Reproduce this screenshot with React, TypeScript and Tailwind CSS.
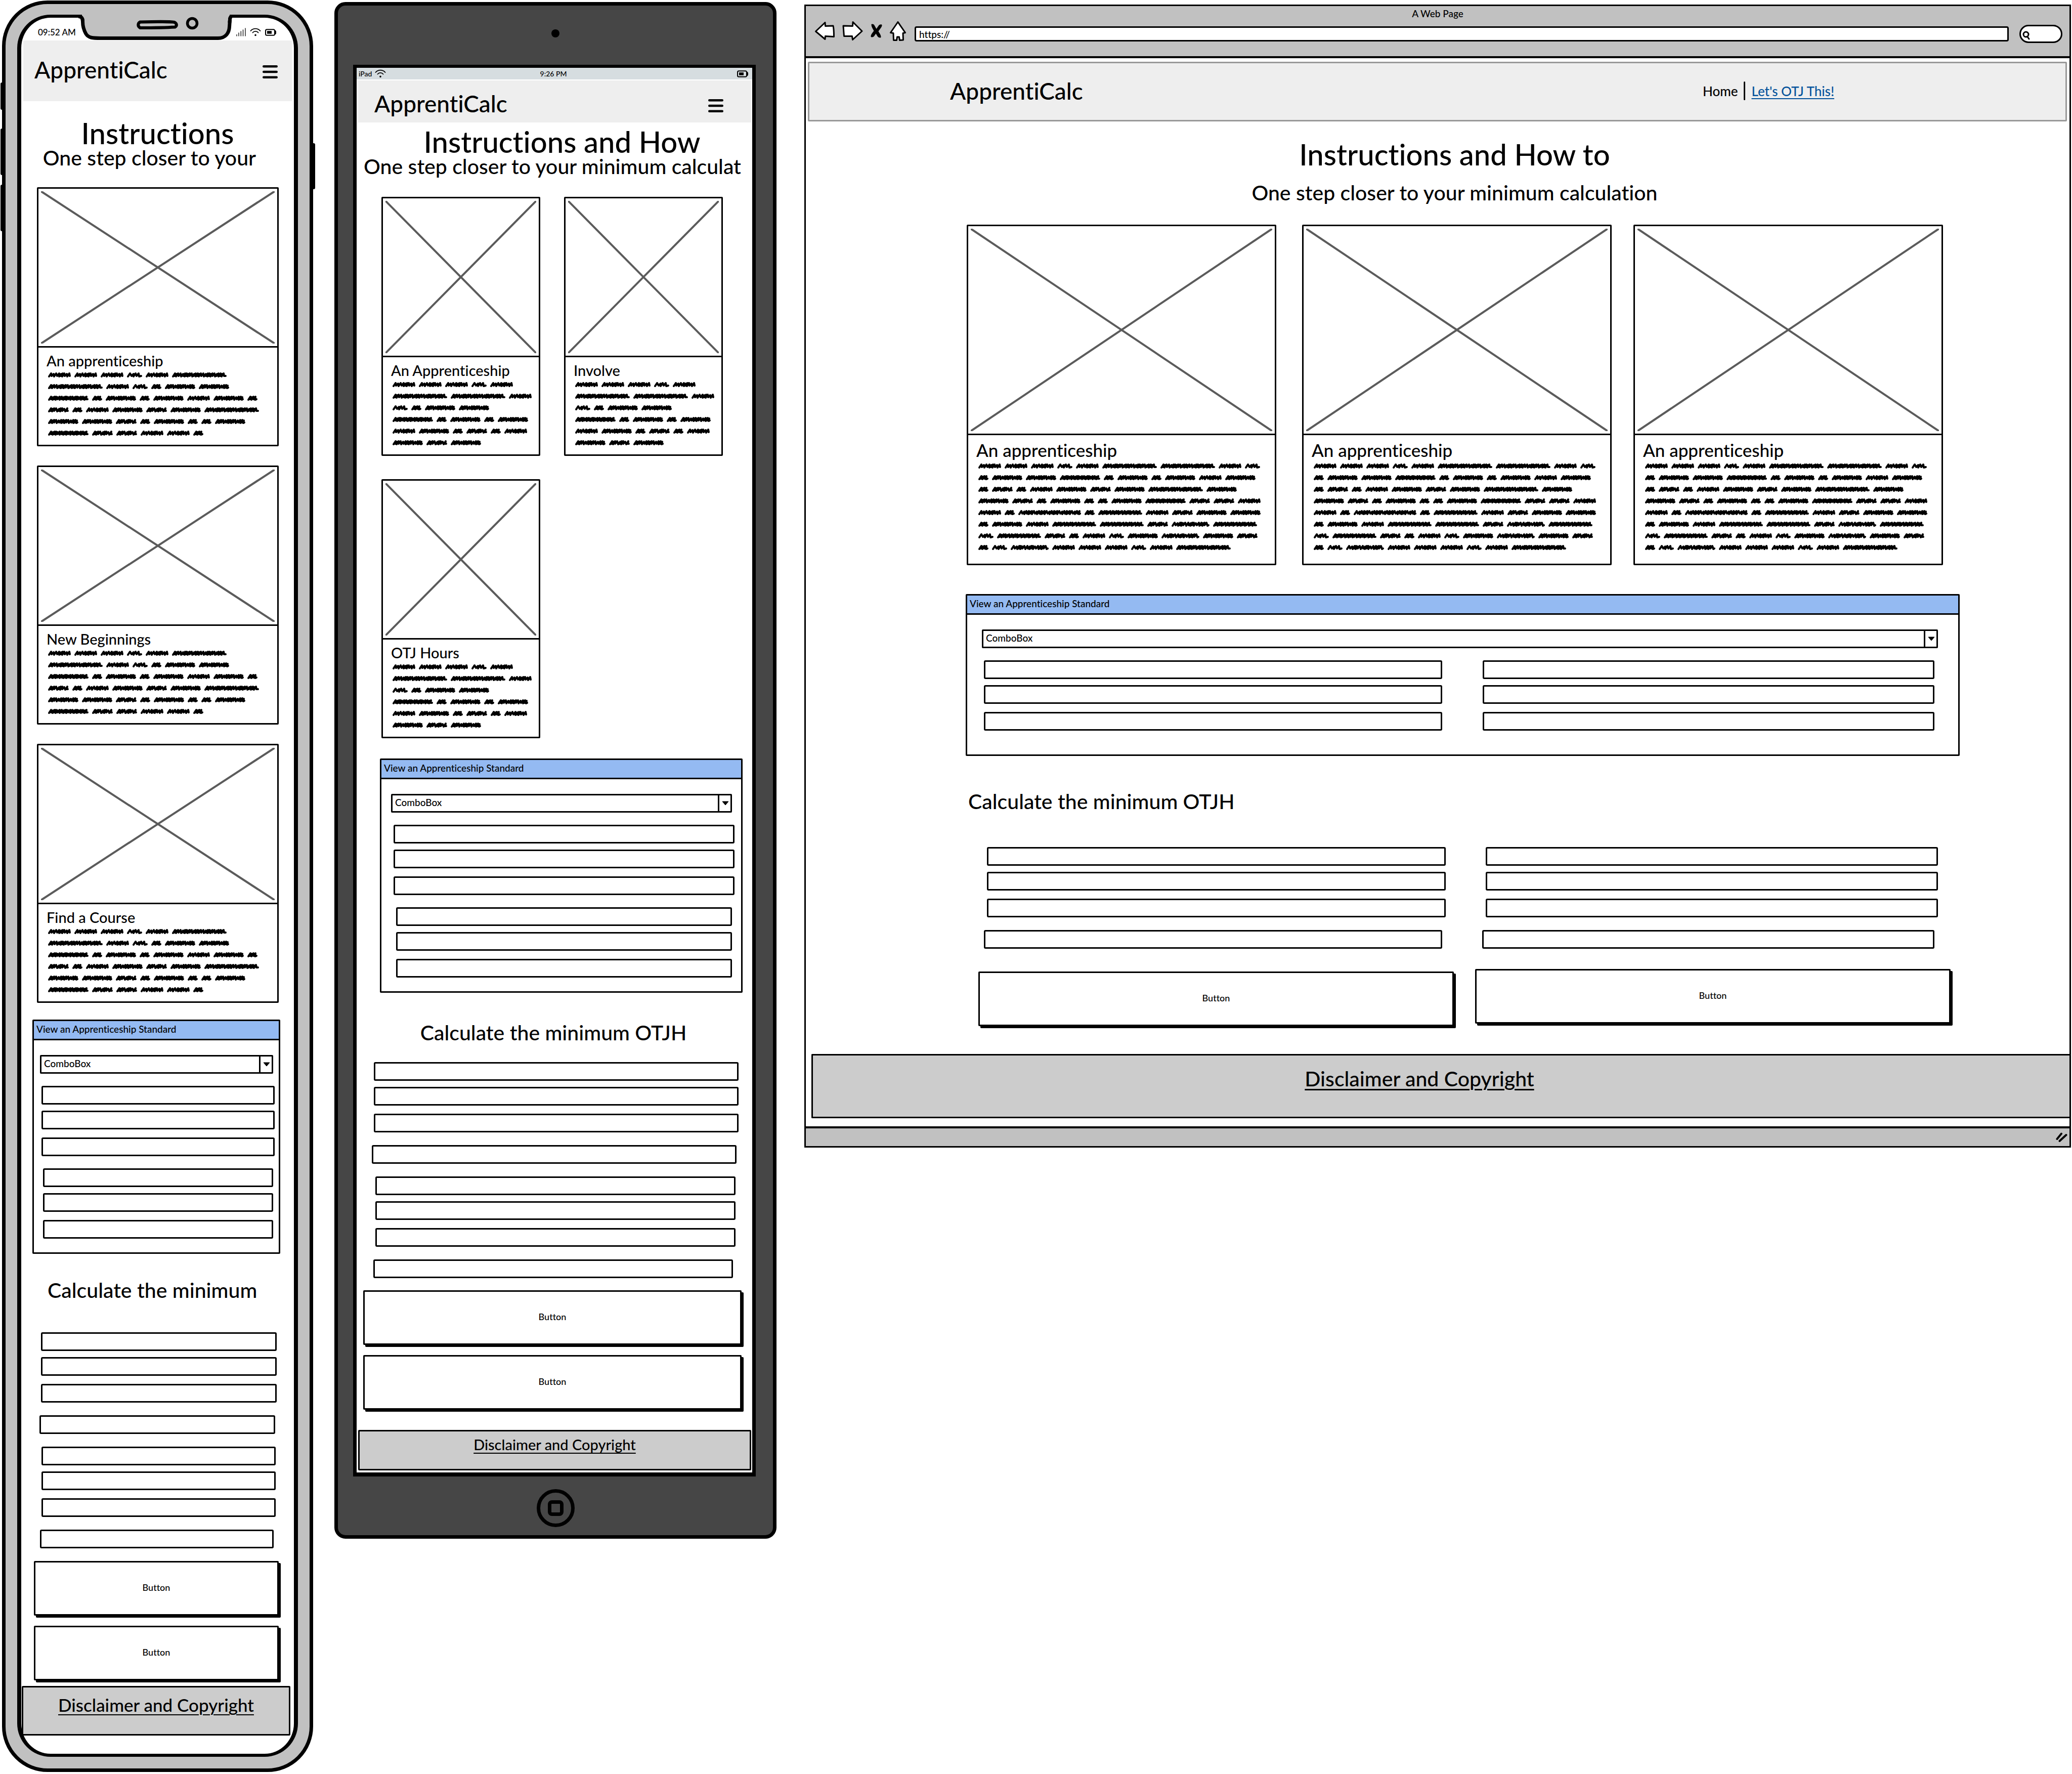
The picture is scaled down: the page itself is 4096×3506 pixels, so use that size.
import React from "react";

const WORDS = [
  45, 45, 45, 30, 45, 108, 108, 45, 30, 20, 60, 60, 80, 20, 60, 20, 60, 45, 60, 20, 41, 20, 45, 60, 41, 60, 108, 60, 60,
  41, 20, 60, 20, 20, 60, 80, 41, 41, 45, 45, 20, 124, 20, 87, 45, 41, 60, 60, 20, 60, 45, 87, 87, 41, 75, 87, 30, 87,
  41, 20, 45, 30, 60, 75, 60, 41, 20, 30, 75, 45, 45, 45, 30, 45, 108,
];

const STEPS: Record<number, number[]> = {
  45: [5, 5, 6, 4, 3, 3],
  30: [7, 4, 6, 5],
  108: [3, 3, 5, 5, 4, 3, 3, 3, 4, 5, 3, 4],
  20: [3, 3, 4],
  60: [3, 3, 4, 5, 5, 4],
  80: [4, 3, 3, 3, 4, 4],
  41: [3, 3, 4, 6],
  124: [6, 4, 5, 3, 3, 4],
  87: [3, 4, 4, 4, 3, 5],
  75: [6, 5, 3, 3, 4],
};

function scribblePath(width: number) {
  const steps = STEPS[width];
  let x = 2;
  let d = "M2 8";
  let i = 0;
  while (x + 4 < width - 2) {
    const step = steps[i % steps.length];
    const top = 2 + (i % 3 === 1 ? 1 : 0);
    const bottom = 7 + (i % 2);
    d += `L${x + 4} ${top}L${Math.min(x + step, width - 2)} ${bottom}`;
    x += step;
    i += 1;
  }
  return `${d}L${width - 2} 7`;
}

function Scribble({ count }: { count: number }) {
  return (
    <div className="flex flex-wrap gap-x-[7px] gap-y-[13px]" aria-hidden="true">
      {WORDS.slice(0, count).map((w, i) => (
        <svg key={i} width={w} height="10" viewBox={`0 0 ${w} 10`} className="shrink-0 overflow-visible">
          <path d={scribblePath(w)} fill="none" stroke="#000" strokeWidth="4" strokeLinejoin="round" strokeLinecap="round" />
        </svg>
      ))}
    </div>
  );
}

function Cross() {
  return (
    <svg className="block h-full w-full p-[5px]" aria-hidden="true">
      <line x1="0" y1="0" x2="100%" y2="100%" stroke="#5b5b5b" strokeWidth="4" />
      <line x1="100%" y1="0" x2="0" y2="100%" stroke="#5b5b5b" strokeWidth="4" />
    </svg>
  );
}

function Card({ title, count }: { title: string; count: number }) {
  return (
    <article className="min-w-0 rounded-[2px] border-[3px] border-black bg-white">
      <div className="h-[314px] border-b-[3px] border-black">
        <Cross />
      </div>
      <div className="pt-[10px] pr-[13px] pb-[18px] pl-4">
        <h3 className="mb-[7px] text-[29px] leading-8 whitespace-nowrap">{title}</h3>
        <div className="pl-[3px]">
          <Scribble count={count} />
        </div>
      </div>
    </article>
  );
}

function WideCard({ className }: { className: string }) {
  return (
    <article className={`min-w-0 flex-1 rounded-[2px] border-[3px] border-black bg-white ${className}`}>
      <div className="h-[413px] border-b-[3px] border-black">
        <Cross />
      </div>
      <div className="pt-[9px] pr-[20px] pb-[27px] pl-4">
        <h3 className="mb-[7px] text-[35px] leading-10">An apprenticeship</h3>
        <div className="pl-1">
          <Scribble count={75} />
        </div>
      </div>
    </article>
  );
}

function Field({ label }: { label: string }) {
  return (
    <input
      type="text"
      aria-label={label}
      className="block h-[37px] w-full rounded-[3px] border-[3px] border-black bg-white px-2 text-[19px] outline-none"
    />
  );
}

function Trio({ label }: { label: string }) {
  return (
    <div>
      <Field label={`${label} 1`} />
      <div className="mt-3">
        <Field label={`${label} 2`} />
      </div>
      <div className="mt-4">
        <Field label={`${label} 3`} />
      </div>
    </div>
  );
}

function Combo() {
  return (
    <div className="relative">
      <select
        aria-label="Apprenticeship standard"
        className="block h-[37px] w-full appearance-none rounded-[2px] border-[3px] border-black bg-white pb-[3px] pl-[5px] text-[19px] leading-6 text-black outline-none"
      >
        <option>ComboBox</option>
      </select>
      <div className="pointer-events-none absolute inset-y-0 right-0 flex w-[28px] items-center justify-center border-l-[3px] border-black pr-[2px]">
        <svg width="14" height="9" viewBox="0 0 14 9" aria-hidden="true">
          <path d="M1 1L13 1L7 8Z" fill="#000" stroke="#000" strokeLinejoin="round" />
        </svg>
      </div>
    </div>
  );
}

function Panel({ className, children }: { className: string; children: React.ReactNode }) {
  return (
    <section className={`rounded-[2px] border-[3px] border-black bg-white ${className}`}>
      <h2 className="h-[38px] border-b-[3px] border-black bg-[#94baf2] pl-[5px] text-[19px] leading-8 whitespace-nowrap">
        View an Apprenticeship Standard
      </h2>
      {children}
    </section>
  );
}

function PushButton() {
  return (
    <button
      type="button"
      className="block h-[108px] w-full rounded-[2px] border-[3px] border-black bg-white pb-1 text-center text-[18px] leading-6 shadow-[4px_4px_0_0_#000]"
    >
      Button
    </button>
  );
}

function Brand() {
  return <div className="text-[46px] leading-[48px] whitespace-nowrap">ApprentiCalc</div>;
}

function MenuButton() {
  return (
    <button type="button" aria-label="Menu" className="flex h-10 items-center">
      <svg width="30" height="26" viewBox="0 0 30 26" aria-hidden="true">
        <path d="M2.3 2.3H27.7M2.3 13H27.7M2.3 23.7H27.7" stroke="#000" strokeWidth="4.6" strokeLinecap="round" />
      </svg>
    </button>
  );
}

function Wifi() {
  return (
    <svg width="22" height="17" viewBox="0 0 22 17" fill="none" stroke="#000" strokeLinecap="round" aria-hidden="true">
      <path d="M1.5 6C6.5 0.2 15.5 0.2 20.5 6" strokeWidth="1.8" />
      <path d="M5.5 9.5C8.5 6 13.5 6 16.5 9.5" strokeWidth="1.8" />
      <ellipse cx="11" cy="14.3" rx="1.7" ry="1.9" fill="#000" stroke="none" />
    </svg>
  );
}

function Battery() {
  return (
    <svg width="22" height="14" viewBox="0 0 22 14" fill="none" stroke="#000" aria-hidden="true">
      <rect x="1" y="1.2" width="18" height="11.5" rx="2.5" strokeWidth="2" />
      <path d="M20 3.5C21.4 4.5 21.4 9.5 20 10.5" strokeWidth="2" />
      <rect x="4" y="4.2" width="9" height="5.5" fill="#000" stroke="none" />
    </svg>
  );
}

function Signal() {
  return (
    <svg width="19" height="17" viewBox="0 0 19 17" stroke="#000" strokeWidth="1.3" strokeLinecap="round" aria-hidden="true">
      <path d="M1 13.5V16M5 10V16M9.3 7V16M13.5 4V16M18 1V16" />
    </svg>
  );
}

function Phone() {
  return (
    <div className="relative px-1 pt-[1px]">
      <div className="absolute top-[163px] left-[1px] h-[54px] w-[6px] rounded-l-[3px] bg-black" />
      <div className="absolute top-[254px] left-[1px] h-[92px] w-[6px] rounded-l-[3px] bg-black" />
      <div className="absolute top-[365px] left-[1px] h-[92px] w-[6px] rounded-l-[3px] bg-black" />
      <div className="absolute top-[283px] right-0 h-[91px] w-[6px] rounded-r-[3px] bg-black" />
      <div className="relative rounded-[90px] border-[7px] border-black bg-[#c1c1c1] px-[23px] pt-[21px] pb-[23px]">
        <div className="relative rounded-[66px] border-x-8 border-y-[6px] border-black bg-white pb-[36px]">
          <svg className="absolute -top-[10px] left-[108px]" width="312" height="56" viewBox="0 0 312 56" aria-hidden="true">
            <rect x="12" y="0" width="292" height="13" fill="#c1c1c1" />
            <path
              d="M5 7.5C11 7.5 13.5 10 13.5 18C13.5 28 16 35 20 42C25 50 33 50.5 49 50.5H281C296 50.5 303 40 303.5 28L304.5 14C304.5 9 306 7.5 309 7.5"
              fill="#c1c1c1"
              stroke="#000"
              strokeWidth="7"
              strokeLinejoin="round"
            />
            <rect x="13" y="0" width="290" height="10" fill="#c1c1c1" />
            <path d="M5 7.5C11 7.5 13.5 10 13.5 18M303.8 20L304.5 14C304.5 9 306 7.5 309 7.5" fill="none" stroke="#000" strokeWidth="7" />
            <path
              d="M127 18.5C160 17.5 190 18 195 19C200 22 200 26 196 28.5C180 29.5 150 30 127 30C122 27 122 21 127 18.5Z"
              fill="none"
              stroke="#000"
              strokeWidth="6"
            />
            <ellipse cx="230" cy="21" rx="9.5" ry="9.5" fill="none" stroke="#000" strokeWidth="5.5" />
          </svg>
          <div className="flex h-[45px] items-center justify-between pt-[12px] pr-[35px] pl-[33px]">
            <span className="text-[17px] leading-5">09:52 AM</span>
            <span className="flex items-center gap-2">
              <Signal />
              <Wifi />
              <Battery />
            </span>
          </div>
          <header className="mx-1 flex h-[120px] items-end justify-between bg-[#eee] pr-[28px] pb-[38px] pl-[22px]">
            <Brand />
            <MenuButton />
          </header>
          <h1 className="mt-[34px] text-center text-[58px] leading-[58px]">Instructions</h1>
          <p className="pr-[32px] text-center text-[41px] leading-10 whitespace-nowrap">One step closer to your</p>
          <div className="mt-[38px] mr-[30px] ml-[31px] flex flex-col gap-[38px]">
            <Card title="An apprenticeship" count={41} />
            <Card title="New Beginnings" count={41} />
            <Card title="Find a Course" count={41} />
          </div>
          <Panel className="mt-[33px] mr-[27px] ml-[22px]">
            <div className="pt-[29px] pb-[27px]">
              <div className="mr-[11px] ml-3">
                <Combo />
              </div>
              <div className="mt-6 mr-2 ml-[15px]">
                <Trio label="Standard detail" />
              </div>
              <div className="mt-6 mr-[11px] ml-[18px]">
                <Trio label="Funding detail" />
              </div>
            </div>
          </Panel>
          <h2 className="mt-12 ml-[52px] text-[41px] leading-[48px] whitespace-nowrap">Calculate the minimum</h2>
          <div className="mt-[59px] mr-[34px] ml-[39px]">
            <Trio label="Start date" />
          </div>
          <div className="mt-[25px] mr-[37px] ml-[36px]">
            <Field label="Weekly hours" />
          </div>
          <div className="mt-[25px] mr-[36px] ml-[40px]">
            <Trio label="End date" />
          </div>
          <div className="mt-[25px] mr-[40px] ml-[37px]">
            <Field label="Annual leave" />
          </div>
          <div className="mt-[25px] mr-[30px] ml-[25px] flex flex-col gap-5">
            <PushButton />
            <PushButton />
          </div>
          <footer className="mt-[11px] mr-[7px] ml-[1px] h-[98px] rounded-[2px] border-[3px] border-black bg-[#ccc] pt-[14px] text-center">
            <a href="#disclaimer" className="text-[35px] leading-10 underline decoration-2 underline-offset-[5px]">
              Disclaimer and Copyright
            </a>
          </footer>
        </div>
      </div>
    </div>
  );
}

function Tablet() {
  return (
    <div className="pt-1 pl-[38px]">
      <div className="rounded-[22px] border-[7px] border-black bg-[#464646] pr-[34px] pl-[30px]">
        <div className="flex h-[117px] items-center justify-center pb-[7px] pl-1">
          <div className="h-4 w-4 rounded-full bg-black" />
        </div>
        <div className="border-x-[7px] border-t-[6px] border-b-8 border-black bg-white pb-1">
          <div className="grid h-[23px] grid-cols-3 items-center bg-[#d6dde0] pr-2 pl-1 text-[14px] leading-5">
            <span className="flex items-center gap-[6px]">
              iPad <Wifi />
            </span>
            <span className="text-center">9:26 PM</span>
            <span className="flex justify-end">
              <Battery />
            </span>
          </div>
          <header className="mt-[2px] mr-[2px] ml-[3px] flex h-[83px] items-end justify-between bg-[#eee] pr-[55px] pb-[13px] pl-8">
            <Brand />
            <MenuButton />
          </header>
          <h1 className="mt-[9px] pl-[30px] text-center text-[58px] leading-[58px] whitespace-nowrap">Instructions and How</h1>
          <p className="pr-2 text-center text-[41px] leading-10 whitespace-nowrap">One step closer to your minimum calculat</p>
          <div className="mt-10 mr-[58px] ml-[49px] grid grid-cols-2 gap-x-[47px] gap-y-[46px]">
            <Card title="An Apprenticeship" count={26} />
            <Card title="Involve" count={26} />
            <Card title="OTJ Hours" count={26} />
          </div>
          <Panel className="mt-10 mr-[19px] ml-[46px]">
            <div className="pt-[29px] pb-[27px]">
              <div className="mr-[18px] ml-[19px]">
                <Combo />
              </div>
              <div className="mt-6 mr-[13px] ml-6">
                <Trio label="Standard detail" />
              </div>
              <div className="mt-6 mr-[18px] ml-[29px]">
                <Trio label="Funding detail" />
              </div>
            </div>
          </Panel>
          <h2 className="mt-[55px] pr-1 text-center text-[41px] leading-[48px] whitespace-nowrap">Calculate the minimum OTJH</h2>
          <div className="mt-[34px] mr-[27px] ml-[34px]">
            <Trio label="Start date" />
          </div>
          <div className="mt-[25px] mr-[31px] ml-[30px]">
            <Field label="Weekly hours" />
          </div>
          <div className="mt-[25px] mr-[33px] ml-[37px]">
            <Trio label="End date" />
          </div>
          <div className="mt-[25px] mr-[38px] ml-[33px]">
            <Field label="Annual leave" />
          </div>
          <div className="mt-6 mr-[21px] ml-[13px] flex flex-col gap-5">
            <PushButton />
            <PushButton />
          </div>
          <footer className="mt-10 mr-[2px] ml-[3px] h-[80px] rounded-[2px] border-[3px] border-black bg-[#ccc] pt-[10px] text-center leading-8">
            <a href="#disclaimer" className="text-[29px] leading-8 underline decoration-2 underline-offset-[5px]">
              Disclaimer and Copyright
            </a>
          </footer>
        </div>
        <div className="flex h-[116px] items-center justify-center pt-2 pl-1">
          <button
            type="button"
            aria-label="Home"
            className="flex h-[75px] w-[75px] items-center justify-center rounded-full border-[7px] border-black"
          >
            <span className="block h-[31px] w-[31px] rounded-[8px] border-[7px] border-black" />
          </button>
        </div>
      </div>
    </div>
  );
}

function Browser() {
  return (
    <div className="pt-[9px] pr-[2px] pl-[55px]">
      <div className="border-[3px] border-black bg-white">
        <div className="h-[103px] border-b-4 border-black bg-[#c1c1c1] pt-[3px]">
          <div className="text-center text-[19px] leading-6">A Web Page</div>
          <div className="mt-[5px] flex h-[46px] items-center pr-[14px] pl-[18px]">
            <div className="flex items-center gap-[15px] pb-3">
              <button type="button" aria-label="Back">
                <svg width="39" height="36" viewBox="0 0 39 36" aria-hidden="true">
                  <path d="M1.5 19L20 1.5L20.5 8.5L36 8C37.5 14 37.5 22 37.5 29.5L20.5 28.5L20 34.5Z" fill="#fff" stroke="#000" strokeWidth="3" strokeLinejoin="round" />
                </svg>
              </button>
              <button type="button" aria-label="Forward">
                <svg width="41" height="38" viewBox="0 0 41 38" aria-hidden="true">
                  <path d="M2 9L20.5 9.5L21 1.5L39 19.5L20.5 36.5L19.5 29.5L3.5 29.5Z" fill="#fff" stroke="#000" strokeWidth="3" strokeLinejoin="round" />
                </svg>
              </button>
              <button type="button" aria-label="Stop">
                <svg width="23" height="28" viewBox="0 0 23 28" aria-hidden="true">
                  <path d="M1.5 2C1 0 6 0 7.5 3L11.5 10L16 3.5C18 1 23 0 22.5 3.5C22 7 18 11 15.5 15C18 19 21 23 20.5 26.5C20 28.5 15 27.5 13.5 24.5L10.5 19.5L7 24.5C5 27 0 27.5 0.5 24C1 20.5 4 17.5 6.5 14C4.5 10 1.5 6 1.5 2Z" fill="#000" />
                </svg>
              </button>
              <button type="button" aria-label="Home page">
                <svg width="32" height="39" viewBox="0 0 32 39" aria-hidden="true">
                  <path d="M16 1.5L30.5 22.5L26 23.5L26.5 37L19.5 37.5L18.5 31L14.5 31L13.5 37.5L7.5 37.5L7 23.5L1.5 22.5Z" fill="#fff" stroke="#000" strokeWidth="3" strokeLinejoin="round" />
                </svg>
              </button>
            </div>
            <input
              type="text"
              aria-label="Address"
              defaultValue="https://"
              className="ml-[17px] h-[30px] min-w-0 flex-1 rounded-[4px] border-[3px] border-black bg-white px-[6px] text-[19px] leading-6 outline-none"
            />
            <div className="relative ml-[21px] w-[85px]">
              <input
                type="text"
                aria-label="Search"
                className="block h-9 w-full rounded-[18px] border-[3px] border-black bg-white pl-6 text-[19px] outline-none"
              />
              <svg className="absolute top-3 left-[6px]" width="15" height="18" viewBox="0 0 15 18" aria-hidden="true">
                <circle cx="7" cy="7" r="5" fill="none" stroke="#000" strokeWidth="3" />
                <path d="M9.5 11L13 16" stroke="#000" strokeWidth="3" strokeLinecap="round" />
              </svg>
            </div>
          </div>
        </div>
        <header className="mt-[7px] mr-[5px] ml-1 flex h-[118px] items-center justify-between rounded-[2px] border-[3px] border-[#999] bg-[#eee] pr-[457px] pb-[3px] pl-[278px]">
          <Brand />
          <nav className="flex items-center text-[26px] leading-8">
            <a href="#home">Home</a>
            <span className="mx-3 h-[37px] w-[3px] rounded-full bg-black" />
            <a href="#otj" className="text-[#05549c] underline decoration-2 underline-offset-4">
              Let's OTJ This!
            </a>
          </nav>
        </header>
        <main className="mr-[217px] ml-[316px]">
          <div className="pr-[32px] text-center">
            <h1 className="mt-9 text-[58px] leading-[58px]">Instructions and How to</h1>
            <p className="mt-[27px] text-[41px] leading-10">One step closer to your minimum calculation</p>
          </div>
          <div className="mt-[43px] mr-[33px] ml-[2px] flex">
            <WideCard className="" />
            <WideCard className="ml-[51px]" />
            <WideCard className="ml-[43px]" />
          </div>
          <Panel className="mt-[57px]">
            <div className="pt-[29px] pb-[47px]">
              <div className="mr-10 ml-[29px]">
                <Combo />
              </div>
              <div className="mt-6 mr-[47px] ml-[33px] grid grid-cols-[906fr_893fr] gap-20">
                <Trio label="Standard detail" />
                <Trio label="Funding detail" />
              </div>
            </div>
          </Panel>
          <h2 className="mt-[66px] ml-[5px] text-[41px] leading-[48px]">Calculate the minimum OTJH</h2>
          <div className="mt-[66px] mr-[43px] ml-[42px] grid grid-cols-[907fr_894fr] gap-[79px]">
            <Trio label="Start date" />
            <Trio label="End date" />
          </div>
          <div className="mt-[25px] mr-[50px] ml-[36px] grid grid-cols-[907fr_894fr] gap-[79px]">
            <Field label="Weekly hours" />
            <Field label="Annual leave" />
          </div>
          <div className="mt-10 mr-[18px] ml-[25px] grid grid-cols-2 gap-[42px]">
            <div className="pt-[5px]">
              <PushButton />
            </div>
            <PushButton />
          </div>
        </main>
        <footer className="mt-[55px] ml-[11px] h-[127px] rounded-l-[2px] border-y-[3px] border-l-[3px] border-black bg-[#ccc] pt-[22px] pr-[86px] text-center">
          <a href="#disclaimer" className="text-[41px] leading-[48px] underline decoration-[3px] underline-offset-[5px]">
            Disclaimer and Copyright
          </a>
        </footer>
        <div className="mt-4 flex h-[39px] items-center justify-end border-t-4 border-black bg-[#c1c1c1] pr-1">
          <svg width="23" height="19" viewBox="0 0 23 19" aria-hidden="true">
            <path d="M2.5 13L11 2.5M7.5 17L20.5 5" stroke="#000" strokeWidth="4" strokeLinecap="round" />
          </svg>
        </div>
      </div>
    </div>
  );
}

export default function App() {
  return (
    <div className="grid w-full grid-cols-[623fr_912fr_2561fr] items-start bg-white font-['Lato',sans-serif] font-medium text-black [font-variant-ligatures:none]">
      <Phone />
      <Tablet />
      <Browser />
    </div>
  );
}
